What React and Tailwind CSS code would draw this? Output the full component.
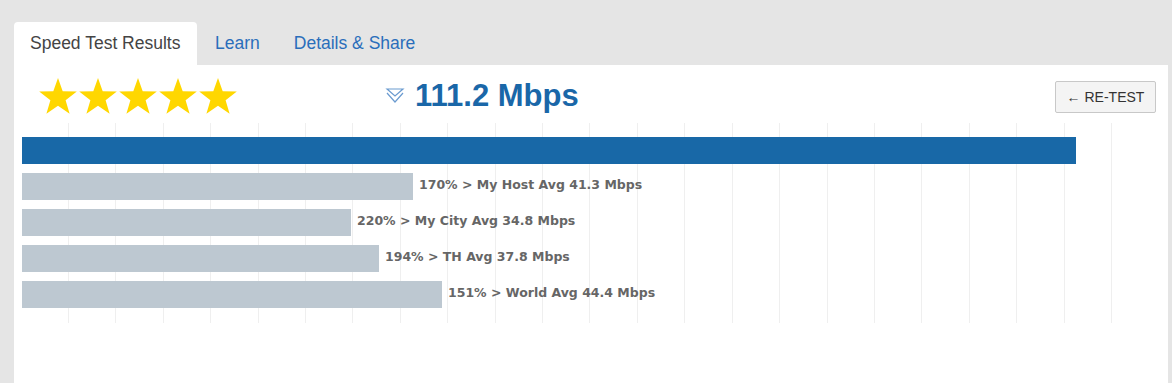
import React from 'react';

const bars = [
  { width: 391, label: '170% > My Host Avg 41.3 Mbps' },
  { width: 329, label: '220% > My City Avg 34.8 Mbps' },
  { width: 357, label: '194% > TH Avg 37.8 Mbps' },
  { width: 420, label: '151% > World Avg 44.4 Mbps' },
];

function Star() {
  return (
    <svg width="40" height="38" viewBox="0 0 40 38">
      <polygon
        points="20,1 24.7,14.2 38.8,14.6 27.6,23.2 31.6,36.7 20,28.7 8.4,36.7 12.4,23.2 1.2,14.6 15.3,14.2"
        fill="#ffd700"
      />
    </svg>
  );
}

export default function App() {
  return (
    <div className="w-[1172px] h-[383px] bg-[#e5e5e5] pt-[22px] pl-[14px] pr-[4px] overflow-hidden" style={{ fontFamily: '"Liberation Sans", Arial, sans-serif' }}>
      {/* Tabs */}
      <div className="flex items-end h-[43px] text-[17.5px]">
        <div className="h-full w-[183px] pl-4 bg-white rounded-t-[4px] flex items-center text-[#444]">
          Speed Test Results
        </div>
        <div className="h-full px-4 ml-[2px] flex items-center text-[#2a6ebb]">Learn</div>
        <div className="h-full px-4 ml-[2px] flex items-center text-[#2a6ebb]">Details &amp; Share</div>
      </div>

      {/* Panel */}
      <div className="bg-white h-[318px] px-2">
        {/* Header row */}
        <div className="h-[58px] flex items-start">
          <div className="flex ml-4 mt-[12px]">
            <Star /><Star /><Star /><Star /><Star />
          </div>
          <div className="flex items-center ml-[147px] mt-[15px]">
            <svg width="20" height="17" viewBox="0 0 20 17" fill="none" stroke="#6b9bd0" strokeWidth="1.2">
              <path d="M2 2 L10 9 L18 2 Z" />
              <path d="M2 6 L10 15 L18 6" />
            </svg>
            <span className="ml-[10px] text-[31px] font-bold text-[#1a67a8] leading-none">111.2 Mbps</span>
          </div>
          <button className="ml-auto mr-[4px] mt-[16px] w-[101px] h-[32px] border border-[#c8c8c8] bg-[#f4f4f4] rounded-[2px] text-[14px] text-[#333] flex items-center justify-center">
            ← RE-TEST
          </button>
        </div>

        {/* Chart */}
        <div className="relative h-[200px] pt-[14px]">
          <div className="absolute top-0 bottom-0 left-[46px] w-[1044px] flex">
            {Array.from({ length: 22 }).map((_, i) => (
              <div key={i} className="flex-1 border-l border-[#efefef] last:border-r" />
            ))}
          </div>
          <div className="relative flex flex-col gap-[9px]">
            <div className="h-[27px] w-[1054px] bg-[#1868a7]" />
            {bars.map((b) => (
              <div key={b.label} className="flex items-center h-[27px]">
                <div className="h-full bg-[#bdc8d1]" style={{ width: b.width }} />
                <span className="ml-[6px] mb-[3px] text-[12.5px] font-bold text-[#666] whitespace-nowrap" style={{ fontFamily: '"DejaVu Sans", Verdana, sans-serif' }}>
                  {b.label}
                </span>
              </div>
            ))}
          </div>
        </div>
      </div>
    </div>
  );
}
